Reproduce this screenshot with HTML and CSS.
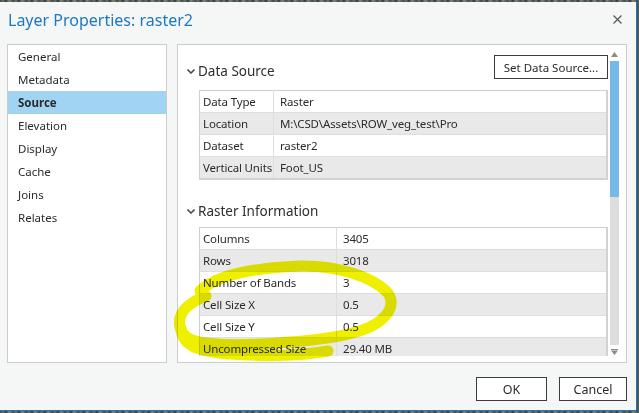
FILE: index.html
```html
<!DOCTYPE html>
<html>
<head>
<meta charset="utf-8">
<link rel="stylesheet" href="styles.css">
</head>
<body>
<div class="dialog">
  <div class="titlebar">
    <div class="title">Layer Properties: raster2</div>
    <svg class="close" width="9" height="9" viewBox="0 0 9 9"><path d="M0.5 0.5L8.5 8.5M8.5 0.5L0.5 8.5"/></svg>
  </div>
  <div class="main">
    <nav class="nav">
      <div class="nav-item">General</div>
      <div class="nav-item">Metadata</div>
      <div class="nav-item active">Source</div>
      <div class="nav-item">Elevation</div>
      <div class="nav-item">Display</div>
      <div class="nav-item">Cache</div>
      <div class="nav-item">Joins</div>
      <div class="nav-item">Relates</div>
    </nav>
    <div class="pane">
      <div class="content">
        <div class="section-head first">
          <div class="heading"><svg class="chev" width="8" height="5" viewBox="0 0 8 5"><path d="M0.5 0.5L4 4L7.5 0.5"/></svg>Data Source</div>
          <button class="btn set-ds">Set Data Source...</button>
        </div>
        <table class="props ds">
          <colgroup><col class="c1"><col></colgroup>
          <tr><td>Data Type</td><td>Raster</td></tr>
          <tr class="alt"><td>Location</td><td>M:\CSD\Assets\ROW_veg_test\Pro</td></tr>
          <tr><td>Dataset</td><td>raster2</td></tr>
          <tr class="alt"><td>Vertical Units</td><td>Foot_US</td></tr>
        </table>
        <div class="section-head second">
          <div class="heading"><svg class="chev" width="8" height="5" viewBox="0 0 8 5"><path d="M0.5 0.5L4 4L7.5 0.5"/></svg>Raster Information</div>
        </div>
        <table class="props ri">
          <colgroup><col class="c1"><col></colgroup>
          <tr><td>Columns</td><td>3405</td></tr>
          <tr class="alt"><td>Rows</td><td>3018</td></tr>
          <tr><td>Number of Bands</td><td>3</td></tr>
          <tr class="alt"><td>Cell Size X</td><td>0.5</td></tr>
          <tr><td>Cell Size Y</td><td>0.5</td></tr>
          <tr class="alt"><td>Uncompressed Size</td><td>29.40 MB</td></tr>
        </table>
      </div>
      <div class="scrollbar">
        <svg class="arrow" width="9" height="9" viewBox="0 0 9 9"><path d="M4.5 2L8 7H1Z"/></svg>
        <div class="thumb"></div>
        <div class="track"></div>
        <svg class="arrow" width="9" height="9" viewBox="0 0 9 9"><path d="M1 2H8V3H1ZM1 3.5H8L4.5 8Z"/></svg>
      </div>
    </div>
  </div>
  <div class="footer">
    <button class="btn ok">OK</button>
    <button class="btn cancel">Cancel</button>
  </div>
</div>
<svg class="marker" width="639" height="413" viewBox="0 0 639 413">
  <path d="M200 291 C215 276 250 268 300 266 C335 265 372 276 388 293 C396 305 388 318 370 327 C350 336 320 340 290 342 C255 345 215 347 192 340 C176 333 176 316 188 306 C194 301 200 298 206 296"/>
  <path d="M181 328 C182 345 195 351 230 354 C270 357 305 355 328 351"/>
</svg>
</body>
</html>
```

FILE: styles.css
```css
html, body {
  margin: 0;
  padding: 0;
}
body {
  width: 639px;
  height: 413px;
  overflow: hidden;
  position: relative;
  background: repeating-linear-gradient(90deg, #3d4a46 0px, #6c746e 3px, #2f3b3a 6px, #808a83 9px, #45514c 13px);
  font-family: "Noto Sans", "Open Sans", sans-serif;
  color: #262626;
}
.dialog {
  margin-top: 2px;
  width: 636px;
  height: 408px;
  background: #f5f7f7;
  border-right: 1px solid #1c75c8;
  border-bottom: 1px solid #1c75c8;
  display: flex;
  flex-direction: column;
}
.titlebar {
  height: 42px;
  display: flex;
  align-items: flex-start;
  justify-content: space-between;
  flex-shrink: 0;
}
.title {
  margin: 6px 0 0 8px;
  font-size: 16px;
  line-height: 24px;
  color: #1c78c2;
}
.close {
  margin: 13px 14px 0 0;
  fill: none;
  stroke: #555;
  stroke-width: 1.2;
}
.main {
  display: flex;
  gap: 10px;
  padding-left: 7px;
  height: 319px;
  flex-shrink: 0;
}
.nav {
  width: 160px;
  box-sizing: border-box;
  border: 1px solid #cccccc;
  background: #ffffff;
}
.nav-item {
  height: 23px;
  line-height: 23px;
  padding-left: 10px;
  font-size: 11.5px;
  color: #2b2b2b;
}
.nav-item.active {
  background: #a1d4f2;
  font-weight: bold;
}
.pane {
  width: 450px;
  box-sizing: border-box;
  border: 1px solid #cccccc;
  background: #ffffff;
  display: flex;
}
.content {
  flex: 1;
  overflow: hidden;
  margin-bottom: 6px;
}
.section-head {
  display: flex;
  align-items: flex-start;
  justify-content: space-between;
  padding-left: 9px;
}
.section-head.first {
  padding-top: 10px;
  padding-right: 1px;
}
.section-head.second {
  margin-top: 21px;
}
.heading {
  display: flex;
  align-items: center;
  font-size: 13.5px;
  line-height: 21px;
  color: #2e2e2e;
}
.section-head.first .heading {
  margin-top: 6px;
}
.chev {
  fill: none;
  stroke: #505050;
  stroke-width: 1.6;
  margin-right: 3px;
}
.btn {
  font-family: "Noto Sans", "Open Sans", sans-serif;
  background: #ffffff;
  border: 1px solid #3c3c3c;
  color: #2b2b2b;
  padding: 0;
  box-sizing: border-box;
  cursor: default;
}
.set-ds {
  width: 114px;
  height: 24px;
  font-size: 11.5px;
}
.props {
  margin-left: 21px;
  width: 409px;
  table-layout: fixed;
  border-collapse: collapse;
  font-size: 11.5px;
  letter-spacing: -0.15px;
  color: #2b2b2b;
  border-top: 1px solid #cfcfcf;
  border-left: 1px solid #cfcfcf;
  border-right: 2px solid #d2d2d2;
  border-bottom: 2px solid #d2d2d2;
}
.props.ds {
  margin-top: 8px;
}
.props.ri {
  margin-top: 5px;
}
.props.ds .c1 {
  width: 74px;
}
.props.ri .c1 {
  width: 137px;
}
.props td {
  height: 21px;
  padding: 0 0 0 3px;
  border-bottom: 1px solid #dedede;
  white-space: nowrap;
  overflow: hidden;
  line-height: 21px;
}
.props td + td {
  border-left: 1px solid #dedede;
  padding-left: 6px;
}
.props tr.alt td {
  background: #e9e9e9;
}
.scrollbar {
  width: 9px;
  margin: 5px 7px 6px 1px;
  display: flex;
  flex-direction: column;
  align-items: center;
}
.arrow {
  fill: #8a8a8a;
  flex-shrink: 0;
}
.thumb {
  width: 9px;
  height: 136px;
  background: #76b9e9;
  margin-top: 2px;
}
.track {
  width: 9px;
  flex: 1;
  background: #dddddd;
  margin-bottom: 2px;
}
.footer {
  display: flex;
  justify-content: flex-end;
  gap: 12px;
  padding: 14px 9px 0 0;
}
.ok {
  width: 71px;
  height: 24px;
  font-size: 12.5px;
}
.cancel {
  width: 68px;
  height: 24px;
  font-size: 12.5px;
}
.marker {
  position: absolute;
  left: 0;
  top: 0;
  pointer-events: none;
  fill: none;
  stroke: #eef000;
  stroke-width: 11;
  stroke-linecap: round;
  stroke-linejoin: round;
  mix-blend-mode: multiply;
}
```
